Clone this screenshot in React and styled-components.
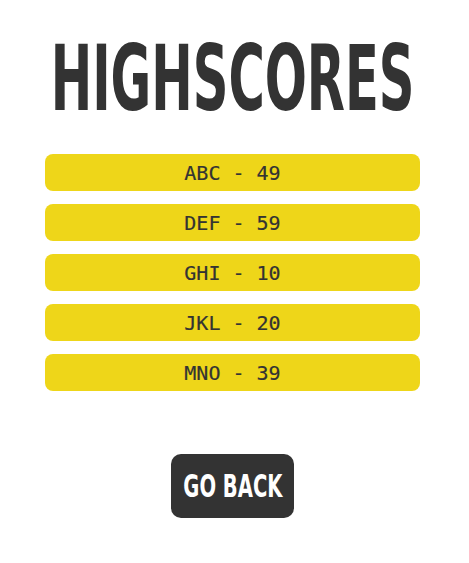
import React from 'react';
import styled, { createGlobalStyle } from 'styled-components';

const GlobalStyle = createGlobalStyle`
  html, body {
    margin: 0;
    padding: 0;
    background: #ffffff;
  }
`;

const Page = styled.main`
  display: flex;
  flex-direction: column;
  align-items: center;
  padding: 33px 4px 0 0;
  font-family: "Liberation Sans", Arial, sans-serif;
`;

// condensed display face: DejaVu Sans Condensed squeezed a bit more
const Title = styled.h1`
  margin: 0;
  font-family: "DejaVu Sans Condensed", "Liberation Sans", sans-serif;
  font-weight: 700;
  font-size: 91px;
  line-height: 1;
  color: #333333;
  white-space: nowrap;

  span {
    display: inline-block;
    margin: 0 -117px;
    transform: scaleX(0.605);
  }
`;

const ScoreList = styled.ol`
  list-style: none;
  margin: 30px 0 0;
  padding: 0;
  width: 375px;
  display: flex;
  flex-direction: column;
  gap: 13px;
`;

const ScoreRow = styled.li`
  height: 37px;
  border-radius: 8px;
  background: #eed619;
  display: flex;
  align-items: center;
  justify-content: center;
  font-family: "DejaVu Sans Mono", "Liberation Mono", monospace;
  font-size: 20px;
  color: #333333;
  white-space: pre;
  -webkit-text-stroke: 0.2px #333333;
`;

const BackButton = styled.button`
  margin-top: 63px;
  width: 123px;
  height: 64px;
  border: none;
  border-radius: 10px;
  background: #333333;
  color: #ffffff;
  font-family: "DejaVu Sans Condensed", "Liberation Sans", sans-serif;
  font-weight: 700;
  font-size: 32px;
  cursor: pointer;
  padding: 0;
  display: flex;
  align-items: center;
  justify-content: center;
  white-space: nowrap;

  span {
    display: inline-block;
    flex: none;
    margin: 0 -23px;
    transform: scaleX(0.68);
  }
`;

const scores = [
  { name: 'ABC', score: 49 },
  { name: 'DEF', score: 59 },
  { name: 'GHI', score: 10 },
  { name: 'JKL', score: 20 },
  { name: 'MNO', score: 39 },
];

export default function App() {
  return (
    <>
      <GlobalStyle />
      <Page>
        <Title><span>HIGHSCORES</span></Title>
        <ScoreList>
          {scores.map((s) => (
            <ScoreRow key={s.name}>{`${s.name} - ${s.score}`}</ScoreRow>
          ))}
        </ScoreList>
        <BackButton><span>GO BACK</span></BackButton>
      </Page>
    </>
  );
}
